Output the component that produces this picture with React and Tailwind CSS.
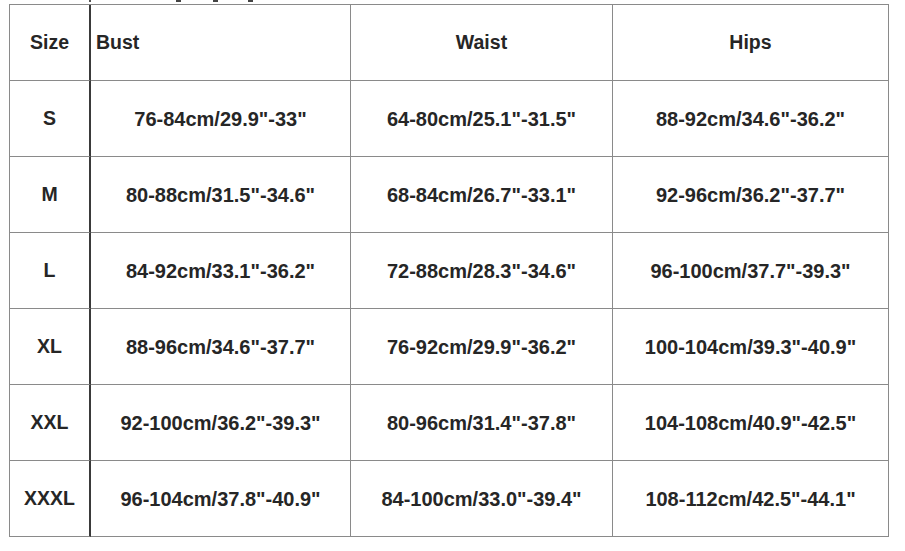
import React from "react";

const rows = [
  ["S", "76-84cm/29.9\"-33\"", "64-80cm/25.1\"-31.5\"", "88-92cm/34.6\"-36.2\""],
  ["M", "80-88cm/31.5\"-34.6\"", "68-84cm/26.7\"-33.1\"", "92-96cm/36.2\"-37.7\""],
  ["L", "84-92cm/33.1\"-36.2\"", "72-88cm/28.3\"-34.6\"", "96-100cm/37.7\"-39.3\""],
  ["XL", "88-96cm/34.6\"-37.7\"", "76-92cm/29.9\"-36.2\"", "100-104cm/39.3\"-40.9\""],
  ["XXL", "92-100cm/36.2\"-39.3\"", "80-96cm/31.4\"-37.8\"", "104-108cm/40.9\"-42.5\""],
  ["XXXL", "96-104cm/37.8\"-40.9\"", "84-100cm/33.0\"-39.4\"", "108-112cm/42.5\"-44.1\""],
];

export default function App() {
  const cell = "h-[76px] border-b border-r border-[#8a8a8a] flex items-center";
  const first = "h-[76px] border-b border-r-2 border-b-[#8a8a8a] border-r-[#3a3a3a] flex items-center justify-center";
  return (
    <div className="w-[905px] h-[551px] bg-white text-[#262626] font-bold" style={{ fontFamily: '"Liberation Sans", Arial, sans-serif' }}>
      <div className="h-[4px] flex items-start">
        <span className="ml-[89px] w-[2px] h-[2px] bg-[#555]" />
        <span className="ml-[85px] w-[5px] h-[2px] bg-[#444]" />
        <span className="ml-[32px] w-[5px] h-[2px] bg-[#444]" />
        <span className="ml-[30px] w-[5px] h-[2px] bg-[#444]" />
      </div>
      <div className="ml-[9px] w-[880px] grid grid-cols-[81px_260px_262px_276px] border-l border-t border-[#8a8a8a]">
        <div className={first + " text-[19.5px]"}>Size</div>
        <div className={cell + " pl-[5px] text-[19.5px]"}>Bust</div>
        <div className={cell + " justify-center text-[19.5px]"}>Waist</div>
        <div className={cell + " justify-center text-[19.5px]"}>Hips</div>
        {rows.map((r) => (
          <React.Fragment key={r[0]}>
            <div className={first + " text-[19.5px]"}>{r[0]}</div>
            <div className={cell + " justify-center text-[20px]"}>{r[1]}</div>
            <div className={cell + " justify-center text-[20px]"}>{r[2]}</div>
            <div className={cell + " justify-center text-[20px]"}>{r[3]}</div>
          </React.Fragment>
        ))}
      </div>
    </div>
  );
}
